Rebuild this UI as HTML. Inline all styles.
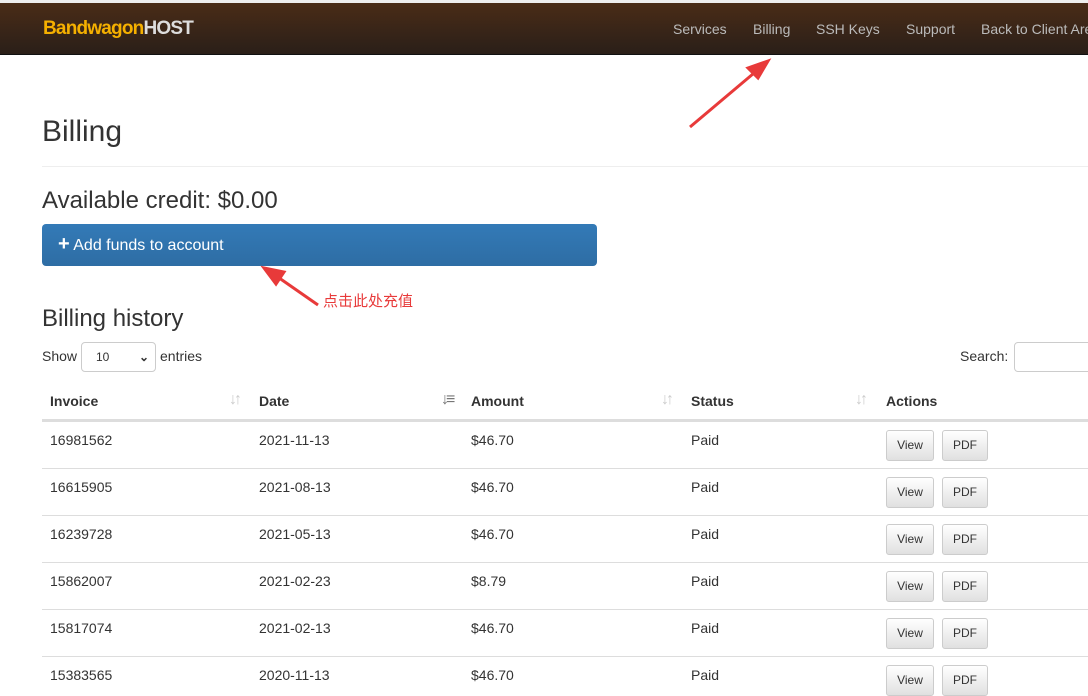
<!DOCTYPE html>
<html><head><style>
body{margin:0;width:1088px;height:683px;overflow:hidden;background:#fff;font-family:"Liberation Sans",Arial,sans-serif;color:#333;position:relative}
.nav{position:absolute;left:0;top:3px;width:1088px;height:51px;background:linear-gradient(#4a2c17,#2a1f18);border-bottom:1px solid #111}
.logo{position:absolute;left:43px;top:15px;font-weight:bold;font-size:19px;letter-spacing:-0.8px;color:#f5b000}
.logo span{color:#ddd}
.nav a{position:absolute;top:18px;font-size:14px;color:#bbb;white-space:nowrap}
.a{position:absolute;white-space:nowrap}
.th{position:absolute;top:393px;font-weight:bold;font-size:14px}
.td{position:absolute;font-size:14px}
.btn{position:absolute;height:29px;border:1px solid #ccc;border-radius:3px;background:linear-gradient(#fff,#e0e0e0);font-size:12px;line-height:29px;text-align:center}
.sort{position:absolute;top:391px;color:#ccc;font-size:16px;font-weight:bold;letter-spacing:-3px}
</style></head><body>
<div style="position:absolute;top:0;left:0;width:1088px;height:3px;background:#eee"></div>
<div class="nav"><div class="logo">Bandwagon<span>HOST</span></div>
<a style="left:673px">Services</a><a style="left:753px">Billing</a><a style="left:816px">SSH Keys</a><a style="left:906px">Support</a><a style="left:981px">Back to Client Area</a></div>
<div class="a" style="left:42px;top:115px;font-size:30px">Billing</div>
<div style="position:absolute;left:42px;top:166px;width:1046px;border-top:1px solid #eee"></div>
<div class="a" style="left:42px;top:187px;font-size:24px">Available credit: $0.00</div>
<div style="position:absolute;left:42px;top:224px;width:555px;height:42px;border-radius:4px;background:linear-gradient(#337ab7,#2e6da4);color:#fff;font-size:16px;line-height:40px;box-sizing:border-box;padding-left:16px"><b style="font-size:20px">+</b> Add funds to account</div>
<svg style="position:absolute;left:0;top:0" width="1088" height="683"><g stroke="#e83a3a" stroke-width="3" fill="#e83a3a"><line x1="690" y1="127" x2="760" y2="68"/><polygon points="768,61 748,68 758,78"/><line x1="318" y1="305" x2="272" y2="273"/><polygon points="264,268 284,272 276,284"/></g></svg>
<div class="a" style="left:323px;top:290px;font-size:15px;color:#e83a3a;font-family:'Liberation Sans','Noto Sans CJK SC',sans-serif">点击此处充值</div>
<div class="a" style="left:42px;top:305px;font-size:24px">Billing history</div>
<div class="a" style="left:42px;top:348px;font-size:14px">Show</div>
<div style="position:absolute;left:81px;top:342px;width:75px;height:30px;border:1px solid #ccc;border-radius:4px;font-size:12px;line-height:28px;padding-left:14px;box-sizing:border-box">10<span style="position:absolute;right:6px;font-weight:bold">⌄</span></div>
<div class="a" style="left:160px;top:348px;font-size:14px">entries</div>
<div class="a" style="left:960px;top:348px;font-size:14px">Search:</div>
<div style="position:absolute;left:1014px;top:342px;width:90px;height:28px;border:1px solid #ccc;border-radius:4px"></div>
<div class="th" style="left:50px">Invoice</div><div class="th" style="left:259px">Date</div><div class="th" style="left:471px">Amount</div><div class="th" style="left:691px">Status</div><div class="th" style="left:886px">Actions</div>
<div class="sort" style="left:229px">↓↑</div><div class="sort" style="left:441px;color:#777">↓≡</div><div class="sort" style="left:661px">↓↑</div><div class="sort" style="left:855px">↓↑</div>
<div style="position:absolute;left:42px;top:419px;width:1046px;border-top:3px solid #ddd"></div>
<div id="rows"></div>
<script>
var d=[["16981562","2021-11-13","$46.70"],["16615905","2021-08-13","$46.70"],["16239728","2021-05-13","$46.70"],["15862007","2021-02-23","$8.79"],["15817074","2021-02-13","$46.70"],["15383565","2020-11-13","$46.70"]],h="";
d.forEach(function(r,i){var y=432+i*47;h+='<div class="td" style="left:50px;top:'+y+'px">'+r[0]+'</div><div class="td" style="left:259px;top:'+y+'px">'+r[1]+'</div><div class="td" style="left:471px;top:'+y+'px">'+r[2]+'</div><div class="td" style="left:691px;top:'+y+'px">Paid</div><div class="btn" style="left:886px;top:'+(y-2)+'px;width:46px">View</div><div class="btn" style="left:942px;top:'+(y-2)+'px;width:44px">PDF</div>';if(i<5)h+='<div style="position:absolute;left:42px;top:'+(y+36)+'px;width:1046px;border-top:1px solid #ddd"></div>'});
document.getElementById('rows').innerHTML=h;
</script>
</body></html>
